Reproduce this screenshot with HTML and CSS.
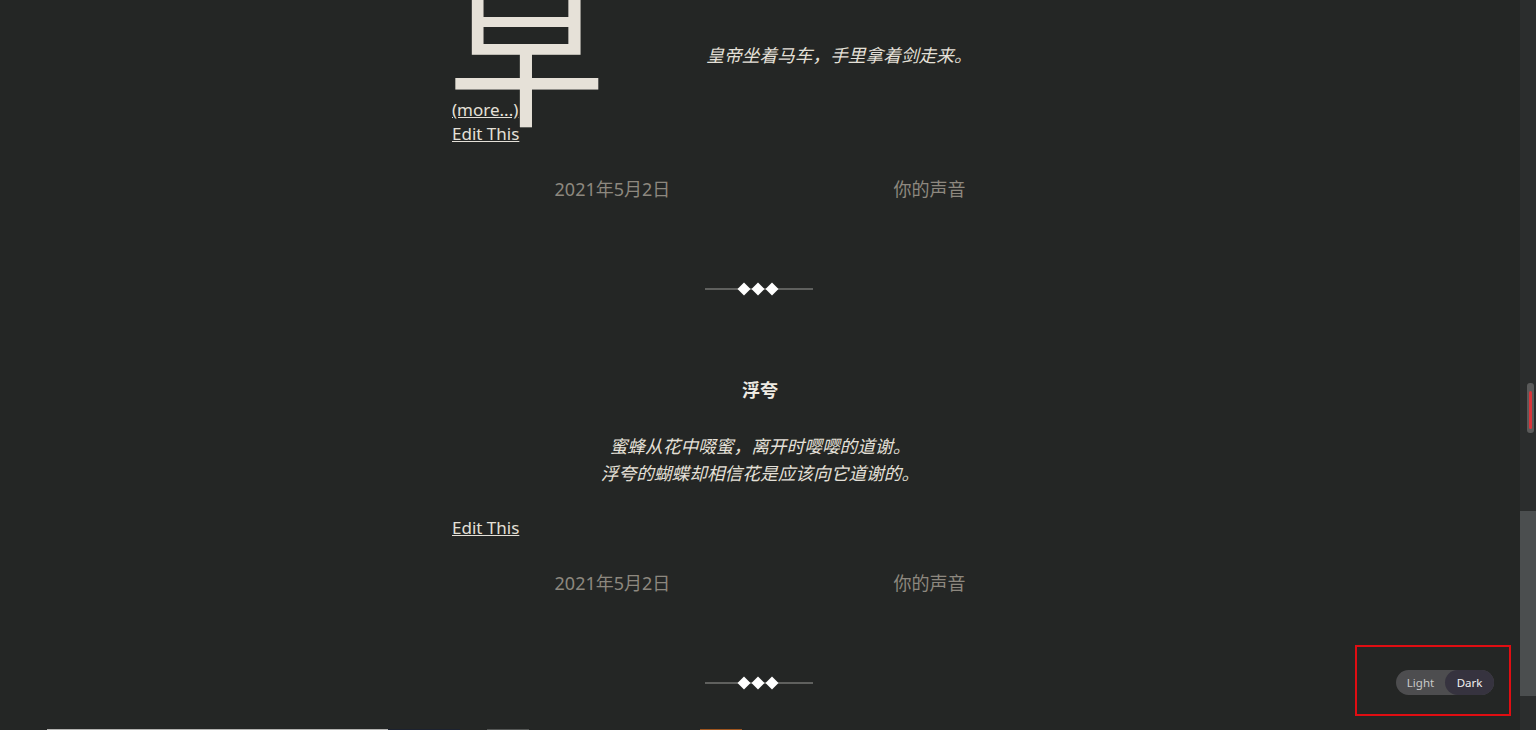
FILE: index.html
```html
<!DOCTYPE html>
<html lang="zh-CN">
<head>
<meta charset="utf-8">
<title>你的声音</title>
<link rel="stylesheet" href="styles.css">
</head>
<body>
<div class="page">
  <main class="feed">
    <article class="post post-lead">
      <div class="lead-body">
        <span class="dropcap">早</span>
        <p class="verse verse-side">皇帝坐着马车，手里拿着剑走来。</p>
        <a class="more" href="#">(more...)</a>
      </div>
      <a class="edit" href="#">Edit This</a>
      <div class="meta"><span>2021年5月2日</span><span>你的声音</span></div>
    </article>

    <div class="divider">
      <svg width="108" height="14" viewBox="0 0 108 14">
        <line x1="0" y1="7" x2="108" y2="7" stroke="#9a9a98" stroke-width="1"/>
        <polygon points="39,0.5 45.5,7 39,13.5 32.5,7" fill="#fff"/>
        <polygon points="53,0.5 59.5,7 53,13.5 46.5,7" fill="#fff"/>
        <polygon points="67,0.5 73.5,7 67,13.5 60.5,7" fill="#fff"/>
      </svg>
    </div>

    <article class="post">
      <h2 class="title">浮夸</h2>
      <p class="verse">蜜蜂从花中啜蜜，离开时嘤嘤的道谢。<br>浮夸的蝴蝶却相信花是应该向它道谢的。</p>
      <a class="edit" href="#">Edit This</a>
      <div class="meta"><span>2021年5月2日</span><span>你的声音</span></div>
    </article>

    <div class="divider divider-last">
      <svg width="108" height="14" viewBox="0 0 108 14">
        <line x1="0" y1="7" x2="108" y2="7" stroke="#9a9a98" stroke-width="1"/>
        <polygon points="39,0.5 45.5,7 39,13.5 32.5,7" fill="#fff"/>
        <polygon points="53,0.5 59.5,7 53,13.5 46.5,7" fill="#fff"/>
        <polygon points="67,0.5 73.5,7 67,13.5 60.5,7" fill="#fff"/>
      </svg>
    </div>
  </main>

  <div class="next-row">
    <div class="thumb thumb-grey"></div>
    <div class="thumb thumb-navy"></div>
    <div class="thumb thumb-dim"></div>
    <div class="thumb thumb-orange"></div>
  </div>
</div>

<div class="scrollbar">
  <div class="scroll-mark"><div class="scroll-mark-red"></div></div>
  <div class="scroll-thumb"></div>
</div>

<div class="toggle-frame">
  <div class="toggle">
    <span class="toggle-opt">Light</span>
    <span class="toggle-opt active">Dark</span>
  </div>
</div>
</body>
</html>
```

FILE: styles.css
```css
html, body {
  margin: 0;
  padding: 0;
  overflow: hidden;
  background: #242625;
}

body {
  font-family: "Noto Sans", "Noto Sans CJK SC", sans-serif;
  color: #e4e0d8;
}

.page {
  width: 1520px;
}

.feed {
  width: 616px;
  margin: 0 auto;
}

.post {
  display: flex;
  flex-direction: column;
}

.lead-body {
  display: flow-root;
}

.dropcap {
  float: left;
  width: 162px;
  height: 100px;
  margin: -4px 0 0 -4px;
  font-family: "Noto Sans CJK SC", sans-serif;
  font-size: 157px;
  line-height: 100px;
  font-weight: 400;
  color: #e6e1d8;
}

.verse {
  margin: 0;
  font-family: "Noto Sans CJK SC", sans-serif;
  font-style: italic;
  font-size: 17.7px;
  line-height: 27px;
  text-align: center;
  color: #e4e0d8;
}

.verse-side {
  padding-top: 41px;
}

.more {
  display: block;
  padding-top: 30px;
  font-size: 17px;
  line-height: 24px;
  color: #e4e0d8;
}

.edit {
  align-self: flex-start;
  font-size: 17px;
  line-height: 24px;
  color: #e4e0d8;
}

.post .verse + .edit {
  margin-top: 30px;
}

.meta {
  display: flex;
  justify-content: space-around;
  margin: 29px -9px 0;
  font-family: "Noto Sans", "Noto Sans CJK SC", sans-serif;
  font-size: 18px;
  line-height: 28px;
  color: #8d887f;
}

.title {
  margin: 0 0 29px;
  font-family: "Noto Sans CJK SC", sans-serif;
  font-size: 18px;
  line-height: 28px;
  font-weight: 700;
  text-align: center;
  color: #eeeae2;
}

.divider {
  display: flex;
  justify-content: center;
  margin: 79px 0;
  height: 14px;
}

.divider-last {
  margin-bottom: 39px;
}

.divider svg {
  display: block;
  margin-left: -2px;
}

.next-row {
  display: flex;
  padding-left: 47px;
  height: 10px;
}

.thumb {
  height: 10px;
}

.thumb-grey { width: 341px; background: #b3b3b1; }
.thumb-navy { width: 72px; background: #1c2230; }
.thumb-dim { width: 42px; margin-left: 27px; background: #555756; }
.thumb-orange { width: 42px; margin-left: 171px; background: #a0561f; }

.scrollbar {
  position: fixed;
  top: 0;
  right: 0;
  width: 16px;
  height: 730px;
  background: #2b2d2d;
}

.scroll-mark {
  position: absolute;
  left: 7px;
  top: 383px;
  width: 7px;
  height: 50px;
  border-radius: 3px;
  background: #5a5a5a;
}

.scroll-mark-red {
  position: absolute;
  left: 2px;
  top: 8px;
  width: 3px;
  height: 38px;
  border-radius: 2px;
  background: #d9343a;
}

.scroll-thumb {
  position: absolute;
  left: 0;
  top: 511px;
  width: 16px;
  height: 185px;
  background: #4b4e4f;
}

.toggle-frame {
  position: fixed;
  left: 1355px;
  top: 645px;
  width: 137px;
  height: 64px;
  padding: 3px 15px 0 0;
  border: 2px solid #e00d12;
  display: flex;
  align-items: center;
  justify-content: flex-end;
}

.toggle {
  display: flex;
  align-items: center;
  height: 25px;
  border-radius: 13px;
  background: #4d4d4f;
  font-family: "Noto Sans", sans-serif;
  font-size: 11.5px;
}

.toggle-opt {
  display: flex;
  align-items: center;
  justify-content: center;
  width: 49px;
  height: 25px;
  border-radius: 13px;
  color: #c9c9c9;
}

.toggle-opt.active {
  background: #36333f;
  color: #f0f0f0;
}
```
